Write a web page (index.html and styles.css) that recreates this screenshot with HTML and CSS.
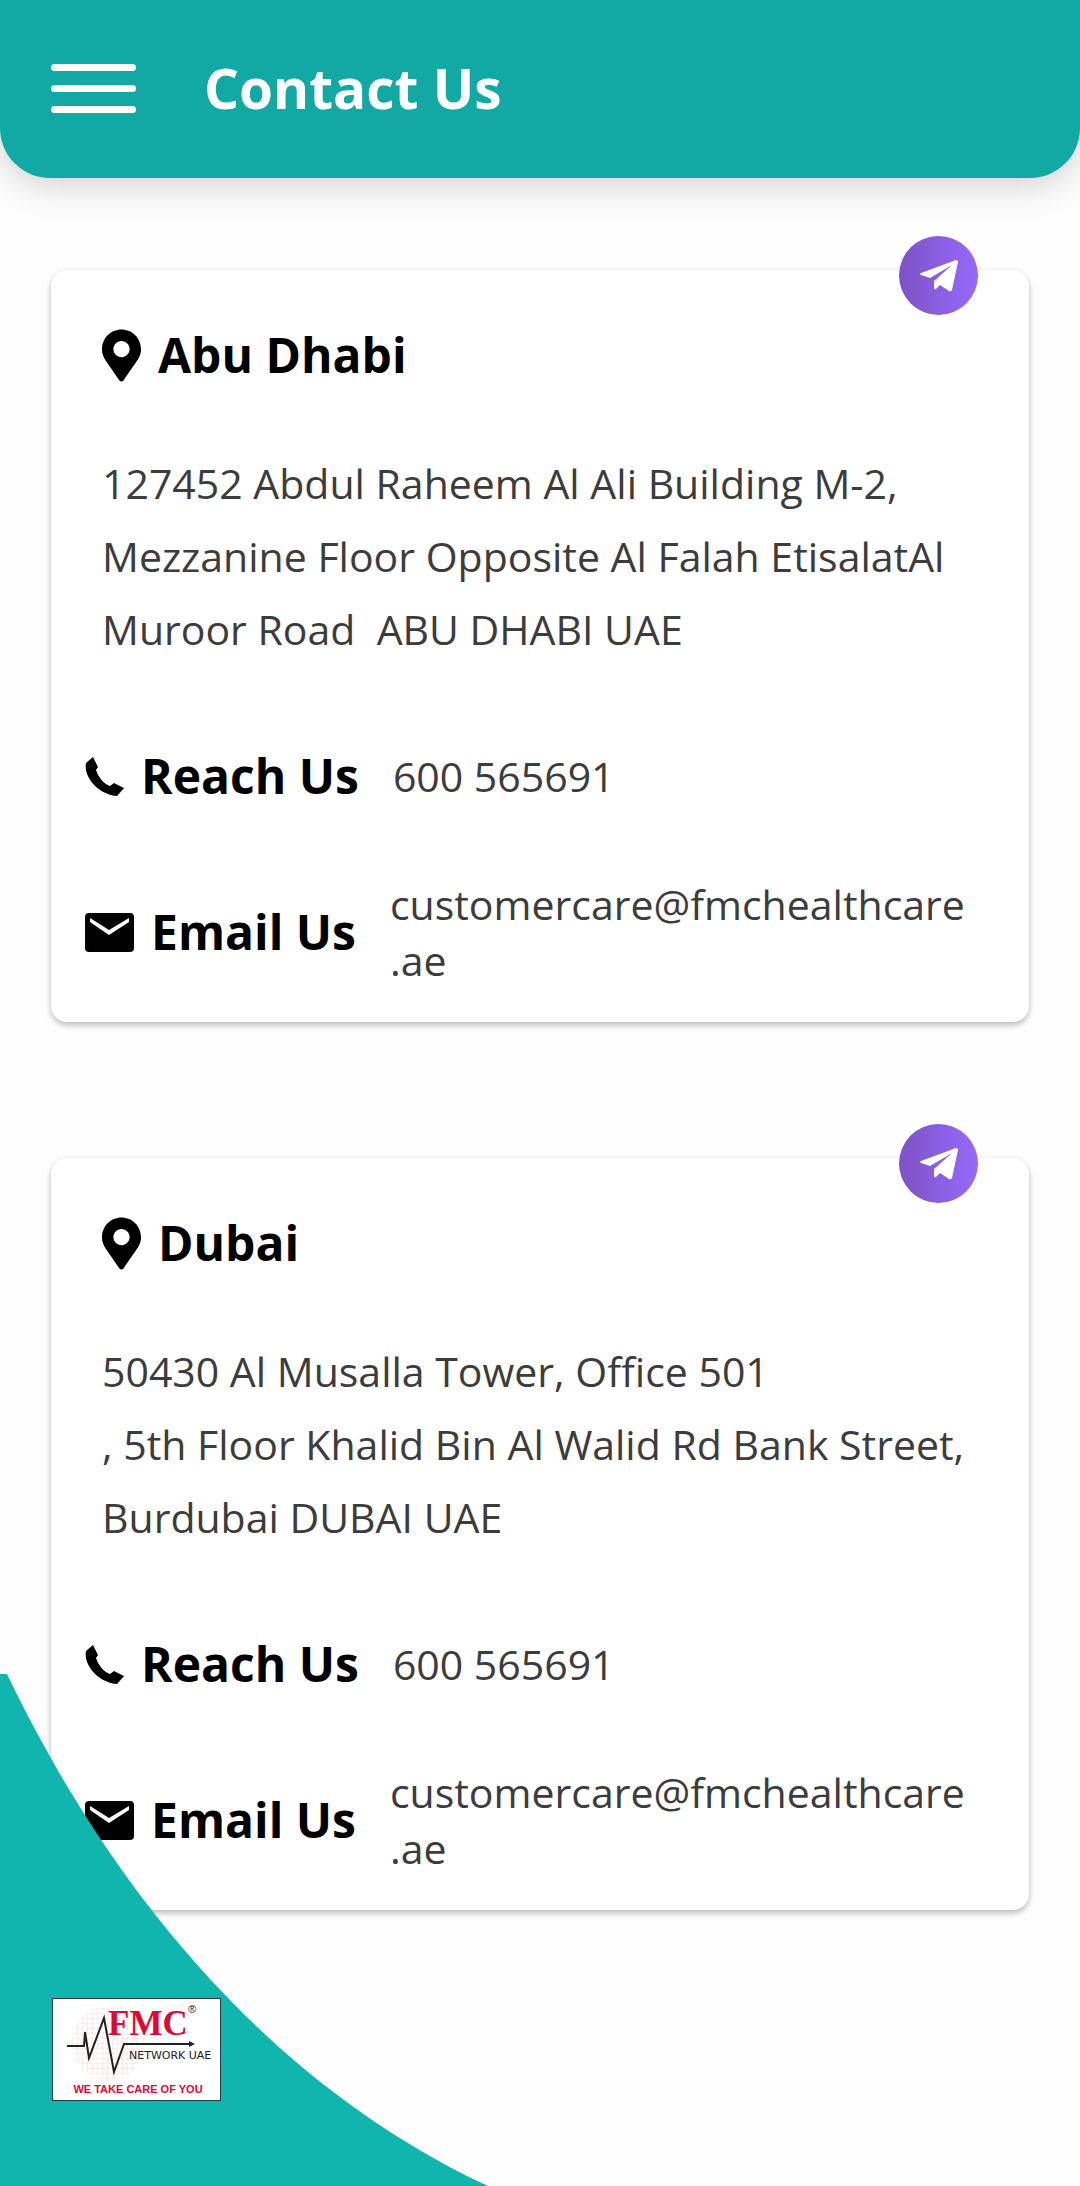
FILE: index.html
```html
<!DOCTYPE html>
<html lang="en">
<head>
  <meta charset="UTF-8" />
  <meta name="viewport" content="width=device-width, initial-scale=1.0"/>
  <title>Contact Us</title>
  <link rel="stylesheet" href="styles.css">
</head>
<body>

  <!-- Shared icons -->
  <svg class="icon-defs" aria-hidden="true">
    <symbol id="icon-pin" viewBox="0 0 384 512">
      <path d="M172.268 501.67C26.97 291.031 0 269.413 0 192 0 85.961 85.961 0 192 0s192 85.961 192 192c0 77.413-26.97 99.031-172.268 309.67-9.535 13.774-29.93 13.773-39.464 0zM192 272c44.183 0 80-35.817 80-80s-35.817-80-80-80-80 35.817-80 80 35.817 80 80 80z"/>
    </symbol>
    <symbol id="icon-phone" viewBox="0 0 39 39">
      <path d="M8 0L1 6C-2 20 14 38 32 39L39 31L29 26L25 29C19 27 13 20 11 13L13 10Z"/>
    </symbol>
    <symbol id="icon-mail" viewBox="0 0 49 39">
      <path fill-rule="evenodd" d="M4 0H45Q49 0 49 4V35Q49 39 45 39H4Q0 39 0 35V4Q0 0 4 0ZM5 5V9L24 22L44 9V5L24 17Z"/>
    </symbol>
    <symbol id="icon-plane" viewBox="0 0 38 32">
      <path d="M36 0Q38 0 38 2L32 30Q31 32 29 31L20 25L16 29Q14 30 14 28V21L32 5L10 18L1 15Q-1 14 1 13Z"/>
    </symbol>
  </svg>

  <header class="topbar">
    <button class="menu-btn" type="button" aria-label="Open menu">
      <span></span>
      <span></span>
      <span></span>
    </button>
    <h1>Contact Us</h1>
  </header>

  <main class="offices">
    <section class="card">
      <button class="direction-btn" type="button" aria-label="Directions to Abu Dhabi office">
        <svg><use href="#icon-plane"/></svg>
      </button>
      <h2 class="city"><svg class="pin"><use href="#icon-pin"/></svg>Abu Dhabi</h2>
      <p class="address">127452 Abdul Raheem Al Ali Building M-2, Mezzanine Floor Opposite Al Falah EtisalatAl Muroor Road&nbsp; ABU DHABI UAE</p>
      <div class="row">
        <h3><svg class="phone"><use href="#icon-phone"/></svg>Reach Us</h3>
        <a href="tel:600565691">600 565691</a>
      </div>
      <div class="row email">
        <h3><svg class="mail"><use href="#icon-mail"/></svg>Email Us</h3>
        <a href="mailto:customercare@fmchealthcare.ae">customercare@fmchealthcare<wbr>.ae</a>
      </div>
    </section>

    <section class="card">
      <button class="direction-btn" type="button" aria-label="Directions to Dubai office">
        <svg><use href="#icon-plane"/></svg>
      </button>
      <h2 class="city"><svg class="pin"><use href="#icon-pin"/></svg>Dubai</h2>
      <p class="address">50430 Al Musalla Tower, Office 501<br>, 5th Floor Khalid Bin Al Walid Rd Bank Street, Burdubai DUBAI UAE</p>
      <div class="row">
        <h3><svg class="phone"><use href="#icon-phone"/></svg>Reach Us</h3>
        <a href="tel:600565691">600 565691</a>
      </div>
      <div class="row email">
        <h3><svg class="mail"><use href="#icon-mail"/></svg>Email Us</h3>
        <a href="mailto:customercare@fmchealthcare.ae">customercare@fmchealthcare<wbr>.ae</a>
      </div>
    </section>
  </main>

  <!-- Corner curve with the logo, stays over the page -->
  <div class="corner">
    <svg class="curve" viewBox="0 0 488 512" aria-hidden="true">
      <path d="M0 0H7C103 200 257 404 488 512H0Z"/>
    </svg>
    <svg class="logo" viewBox="0 0 169 103" role="img" aria-label="FMC Network UAE">
      <defs>
        <pattern id="grid" width="5" height="5" patternUnits="userSpaceOnUse">
          <path d="M5 0H0V5" fill="none" stroke="#f8dcd6"/>
        </pattern>
      </defs>
      <rect class="logo-box" x="0.5" y="0.5" width="168" height="102"/>
      <circle cx="57" cy="45" r="37" fill="url(#grid)"/>
      <text class="logo-name" x="56" y="37">FMC</text>
      <text class="logo-reg" x="136" y="15">®</text>
      <path class="pulse" d="M15 48H32L33 34L37 60L52 20L62 74L72 46H138"/>
      <path d="M137 43L143 46L137 49Z" fill="#222"/>
      <text class="logo-network" x="77" y="61">NETWORK UAE</text>
      <text class="logo-tag" x="86" y="95">WE TAKE CARE OF YOU</text>
    </svg>
  </div>

</body>
</html>
```
FILE: styles.css
```css
* {
  box-sizing: border-box;
}

body {
  margin: 0;
  min-height: 100vh;
  background-color: #fefefe;
  color: #3c3c3c;
  font-family: "Open Sans", "Noto Sans", sans-serif;
  font-size: 41px;
}

h1,
h2,
h3,
p {
  margin: 0;
}

button {
  padding: 0;
  border: none;
  cursor: pointer;
}

.icon-defs {
  display: none;
}

.topbar {
  display: flex;
  align-items: center;
  gap: 68px;
  padding: 50px 51px 52px;
  background-color: #12a9a4;
  border-radius: 0 0 50px 50px;
  box-shadow: 0 8px 36px rgba(0, 0, 0, 0.18);
}

.topbar h1 {
  color: #fff;
  font-size: 55px;
  line-height: 76px;
}

.menu-btn {
  display: flex;
  flex-direction: column;
  gap: 14px;
  width: 85px;
  background: none;
}

.menu-btn span {
  height: 7px;
  background-color: #fff;
  border-radius: 4px;
}

.offices {
  display: flex;
  flex-direction: column;
  gap: 136px;
  padding: 92px 51px;
}

.card {
  position: relative;
  padding: 47px 51px 34px;
  background-color: #fff;
  border-radius: 16px;
  box-shadow: 0 3px 6px rgba(0, 0, 0, 0.28);
}

.direction-btn {
  position: absolute;
  top: -34px;
  right: 51px;
  display: flex;
  align-items: center;
  justify-content: center;
  width: 79px;
  height: 79px;
  border-radius: 50%;
  background: linear-gradient(90deg, #7e53c5, #9669fb);
}

.direction-btn svg {
  width: 38px;
  height: 32px;
  fill: #fff;
}

.city,
.row h3 {
  display: flex;
  flex-shrink: 0;
  align-items: center;
  gap: 17px;
  color: #000;
  font-size: 48px;
  line-height: 76px;
}

.pin {
  width: 39px;
  height: 53px;
}

.phone {
  width: 39px;
  height: 39px;
}

.mail {
  width: 49px;
  height: 39px;
}

.address {
  margin-top: 54px;
  line-height: 73px;
}

.row {
  display: flex;
  align-items: center;
  gap: 34px;
  margin: 72px -17px 0;
}

.row a {
  color: inherit;
  line-height: 56px;
  text-decoration: none;
}

.email {
  margin-top: 62px;
}

.corner {
  position: fixed;
  left: 0;
  bottom: 0;
}

.curve {
  display: block;
  width: 488px;
  height: 512px;
  fill: #10b5ae;
}

.logo {
  position: absolute;
  left: 52px;
  bottom: 85px;
  width: 169px;
  height: 103px;
}

.logo-box {
  fill: #fff;
  stroke: #1d3c46;
}

.pulse {
  fill: none;
  stroke: #222;
  stroke-width: 2;
}

.logo-name {
  fill: #dc0a32;
  font: bold 35px "Liberation Serif", serif;
}

.logo-reg {
  fill: #222;
  font: 11px "Liberation Sans", sans-serif;
}

.logo-network {
  fill: #222;
  font: 11px "DejaVu Sans", sans-serif;
}

.logo-tag {
  fill: #dc0a32;
  font: bold 11px "Liberation Sans", sans-serif;
  text-anchor: middle;
}
```
